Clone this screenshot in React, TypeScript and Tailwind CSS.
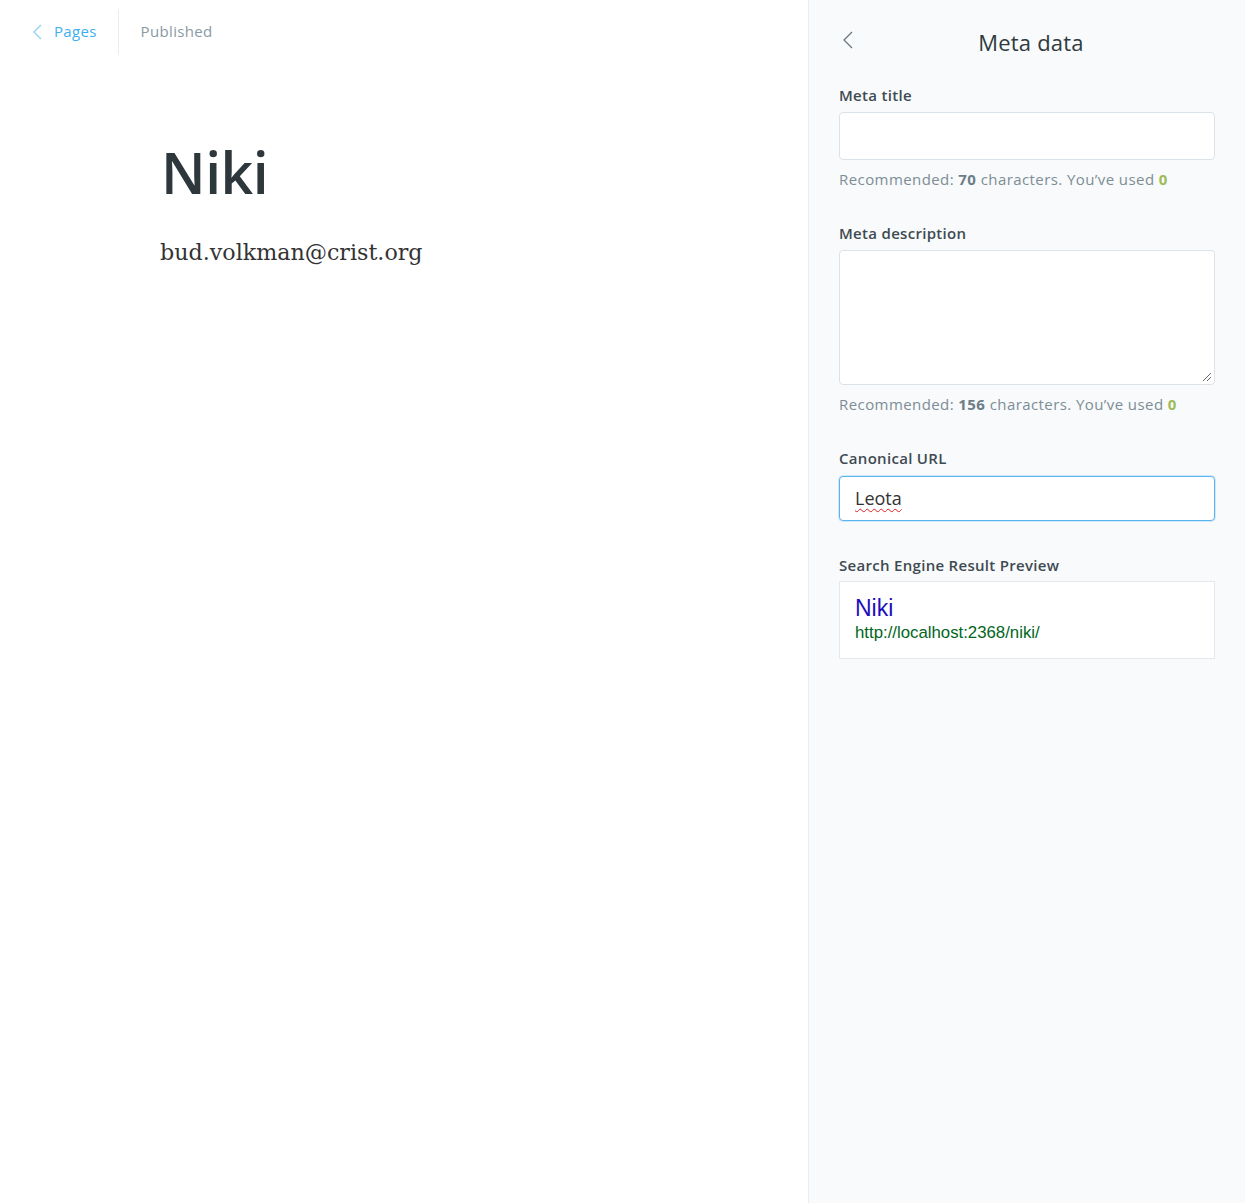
import React from "react";

const sans = { fontFamily: '"Open Sans", "Noto Sans", sans-serif' };

export default function App() {
  return (
    <div className="flex w-[1245px] h-[1203px] bg-white" style={sans}>
      <div className="flex-1 flex flex-col">
        <div className="flex items-center h-[62px] pl-[32px] pt-[1px]">
          <a className="flex items-center gap-[10px] text-[15px] text-[#3eb0ef] pr-[21px] tracking-[0.3px]">
            <svg width="12" height="18" viewBox="0 0 12 18" fill="none" stroke="#8cd0f5" strokeWidth="1.2">
              <path d="M9 2 L2 9 L9 16" />
            </svg>
            <span>Pages</span>
          </a>
          <div className="w-px h-[46px] bg-[#e5eff5]" />
          <span className="ml-[22px] text-[15px] text-[#8a9aa3] tracking-[0.35px]">Published</span>
        </div>
        <div className="pl-[160px] pt-[82px]">
          <h1 className="text-[57px] leading-[1] font-semibold text-[#2e373c] tracking-[-0.5px] ml-[1px]">Niki</h1>
          <p className="mt-[40px] text-[#333] leading-none" style={{ fontFamily: '"DejaVu Serif", "Liberation Serif", serif', fontSize: "22.2px" }}>
            bud.volkman@crist.org
          </p>
        </div>
      </div>
      <div className="w-[437px] shrink-0 border-l border-[#e9eef1] bg-[#f8fafb] px-[30px] tracking-[0.3px]">
        <div className="relative flex items-center justify-center h-[84px]">
          <svg className="absolute left-[3px] top-[31px]" width="12" height="18" viewBox="0 0 12 18" fill="none" stroke="#66737c" strokeWidth="1.2">
            <path d="M10 1 L2 9 L10 17" />
          </svg>
          <h2 className="text-[22px] text-[#2f3a40] font-normal pl-[8px] tracking-[0.2px]">Meta data</h2>
        </div>
        <label className="block text-[15px] font-semibold text-[#3e4a52]">Meta title</label>
        <div className="mt-[5px] h-[48px] bg-white border border-[#dbe3e9] rounded-[4px]" />
        <p className="mt-[8px] text-[15px] text-[#7d8d96] tracking-[0.42px]">
          Recommended: <b className="text-[#6c7e88]">70</b> characters. You’ve used <b className="text-[#9fbb58]">0</b>
        </p>
        <label className="block mt-[32px] text-[15px] font-semibold text-[#3e4a52]">Meta description</label>
        <div className="relative mt-[5px] h-[135px] bg-white border border-[#dbe3e9] rounded-[4px]">
          <svg className="absolute right-[2px] bottom-[2px]" width="10" height="10" viewBox="0 0 10 10" stroke="#666" strokeWidth="1">
            <path d="M9 1 L1 9 M9 5 L5 9" />
          </svg>
        </div>
        <p className="mt-[8px] text-[15px] text-[#7d8d96] tracking-[0.42px]">
          Recommended: <b className="text-[#6c7e88]">156</b> characters. You’ve used <b className="text-[#9fbb58]">0</b>
        </p>
        <label className="block mt-[32px] text-[15px] font-semibold text-[#3e4a52]">Canonical URL</label>
        <div className="mt-[6px] h-[45px] bg-white border border-[#5ab4ef] rounded-[4px] flex items-center pl-[15px] shadow-[0_0_0_1px_rgba(90,180,239,0.25)] tracking-normal">
          <span className="text-[18px] text-[#333] underline decoration-wavy decoration-[#e02020] decoration-[1px] underline-offset-[3px]">Leota</span>
        </div>
        <label className="block mt-[33px] text-[15px] font-semibold text-[#3e4a52]">Search Engine Result Preview</label>
        <div className="mt-[5px] h-[78px] bg-white border border-[#e3e9ee] px-[15px] pt-[13px] tracking-normal" style={{ fontFamily: '"Liberation Sans", Arial, sans-serif' }}>
          <div className="text-[23px] leading-[27px] text-[#1e0fbe]">Niki</div>
          <div className="text-[16.8px] leading-[22px] text-[#006621]">http://localhost:2368/niki/</div>
        </div>
      </div>
    </div>
  );
}
